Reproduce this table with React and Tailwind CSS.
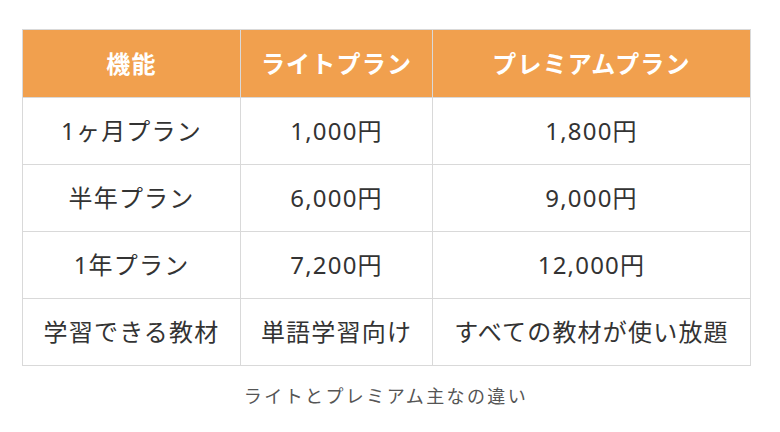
const rows = [
  ['1ヶ月プラン', '1,000円', '1,800円'],
  ['半年プラン', '6,000円', '9,000円'],
  ['1年プラン', '7,200円', '12,000円'],
  ['学習できる教材', '単語学習向け', 'すべての教材が使い放題'],
];

export default function App() {
  return (
    <div
      className="w-[780px] h-[432px] bg-white pt-[29px] pl-[22px]"
      style={{ fontFamily: '"Noto Sans", "Noto Sans CJK JP", sans-serif' }}
    >
      <table className="table-fixed border-collapse w-[728px] text-[24px] tracking-[1.2px] text-[#333]">
        <colgroup>
          <col className="w-[218px]" />
          <col className="w-[192px]" />
          <col className="w-[318px]" />
        </colgroup>
        <thead>
          <tr className="h-[68px] bg-[#f1a04e] text-white">
            <th className="border border-[#d9d9d9] font-bold">機能</th>
            <th className="border border-[#d9d9d9] font-bold">ライトプラン</th>
            <th className="border border-[#d9d9d9] font-bold">プレミアムプラン</th>
          </tr>
        </thead>
        <tbody>
          {rows.map((r) => (
            <tr key={r[0]} className="h-[67px]">
              {r.map((c, i) => (
                <td key={i} className="border border-[#d9d9d9] text-center font-normal">
                  {c}
                </td>
              ))}
            </tr>
          ))}
        </tbody>
      </table>
      <p className="w-[728px] mt-[17px] text-center text-[18px] tracking-[2.4px] text-[#555]">
        ライトとプレミアム主なの違い
      </p>
    </div>
  );
}
